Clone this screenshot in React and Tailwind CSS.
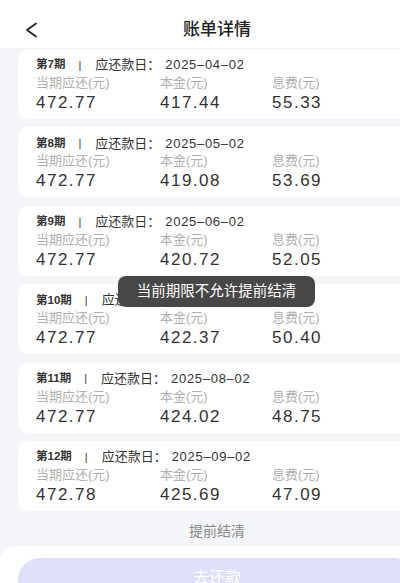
const rows = [
  { no: 7, date: '2025-04-02', total: '472.77', principal: '417.44', fee: '55.33' },
  { no: 8, date: '2025-05-02', total: '472.77', principal: '419.08', fee: '53.69' },
  { no: 9, date: '2025-06-02', total: '472.77', principal: '420.72', fee: '52.05' },
  { no: 10, date: '2025-07-02', total: '472.77', principal: '422.37', fee: '50.40' },
  { no: 11, date: '2025-08-02', total: '472.77', principal: '424.02', fee: '48.75' },
  { no: 12, date: '2025-09-02', total: '472.78', principal: '425.69', fee: '47.09' },
]

function BillCard({ row }) {
  return (
    <div className="h-[70px] bg-white rounded-[10px] pl-[18px] pt-[8px]">
      {/* period + due date */}
      <div className="flex items-center h-[16px] text-[#333]">
        <span className="text-[11.5px] font-bold">第{row.no}期</span>
        <span className="text-[11px] ml-[13px]">|</span>
        <span className="text-[13px] ml-[14px]">应还款日：</span>
        <span className="text-[13px] tracking-[0.7px] ml-[5px]">{row.date.replace(/-/g, '–')}</span>
      </div>
      <div className="grid grid-cols-[124px_112px_1fr] mt-[2px]">
        {[
          ['当期应还(元)', row.total],
          ['本金(元)', row.principal],
          ['息费(元)', row.fee],
        ].map(([label, value]) => (
          <div key={label}>
            <div className="text-[13px] leading-[16px] text-[#b0b0b0]">{label}</div>
            <div className="text-[17px] leading-[22px] mt-[1px] text-[#333] tracking-[1.5px]">{value}</div>
          </div>
        ))}
      </div>
    </div>
  )
}

export default function App() {
  return (
    <div
      className="w-[400px] h-[583px] overflow-hidden relative bg-[#f4f5f9]"
      style={{ fontFamily: '"Liberation Sans", "Noto Sans CJK SC", sans-serif' }}
    >
      <div className="w-[434px] flex flex-col">
        {/* Header */}
        <div className="h-[49px] bg-white flex items-center relative border-b border-[#f0f0f3]">
          <svg className="absolute left-[25px] top-[22px]" width="13" height="16" viewBox="0 0 13 16" fill="none">
            <path d="M11 1.5L2 8l9 6.5" stroke="#222" strokeWidth="1.8" strokeLinecap="round" strokeLinejoin="round" />
          </svg>
          <div className="w-full text-center text-[17px] font-medium text-[#222] pt-[12px]">账单详情</div>
        </div>

        {/* Bills */}
        <div className="flex flex-col gap-[8.4px] px-[18px]">
          {rows.map((row) => (
            <BillCard key={row.no} row={row} />
          ))}
        </div>

        <div className="text-center text-[14px] text-[#888] mt-[10px] h-[25px]">提前结清</div>

        {/* Bottom bar */}
        <div className="bg-white rounded-t-[16px] pt-[12px] px-[18px] h-[80px]">
          <div className="h-[44px] rounded-full bg-[#dedff9] flex justify-center pt-[8px] text-[16px] text-white">
            去还款
          </div>
        </div>
      </div>

      {/* Toast */}
      <div className="absolute left-[118px] top-[276px] w-[197px] h-[31px] rounded-[8px] bg-[#474747] flex items-center justify-center text-white text-[14.5px]">
        当前期限不允许提前结清
      </div>
    </div>
  )
}
